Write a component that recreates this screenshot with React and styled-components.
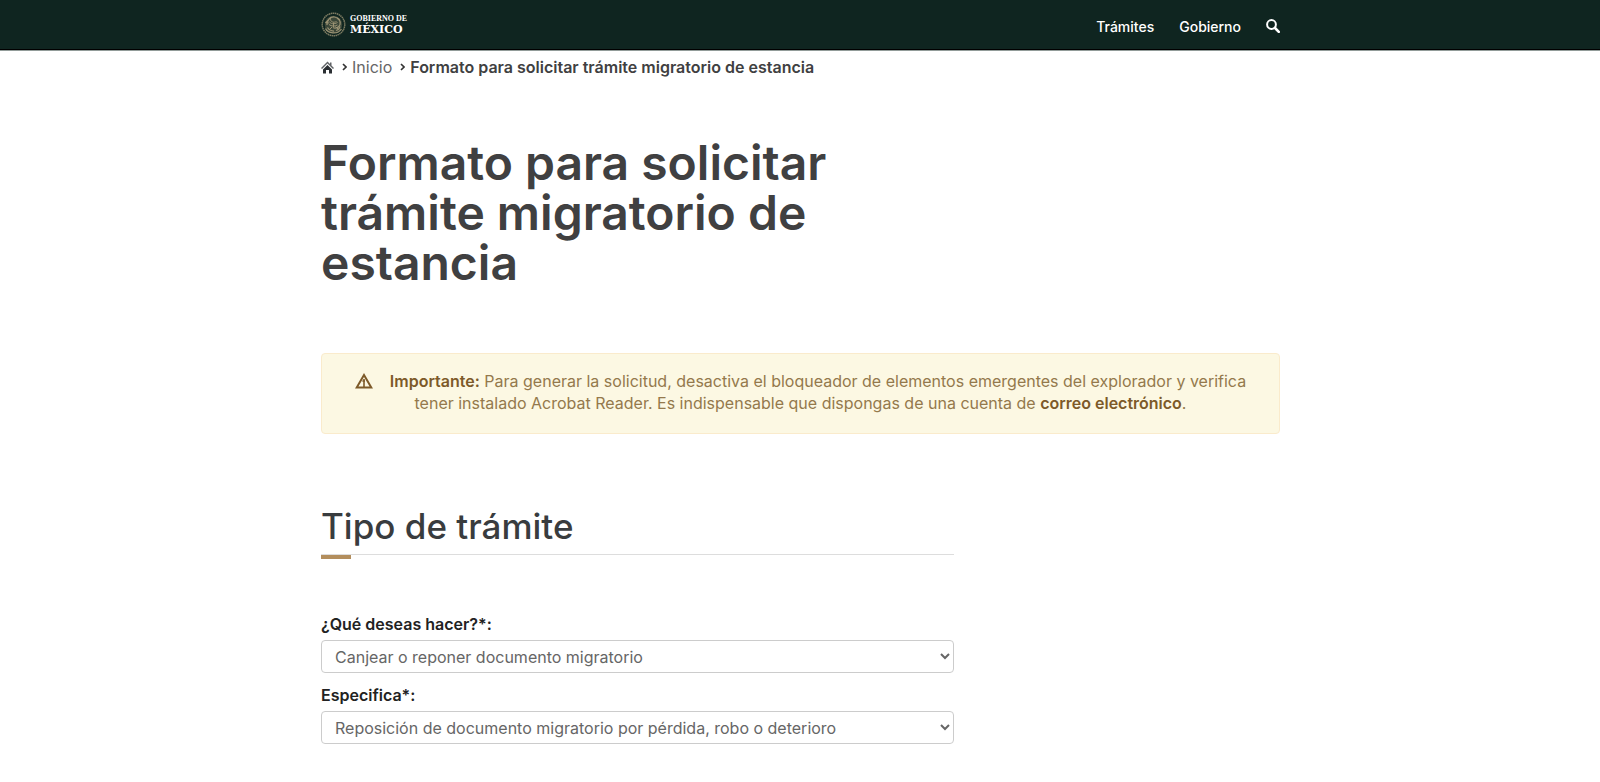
import React, { useState } from 'react'
import styled, { createGlobalStyle } from 'styled-components'

const GlobalStyle = createGlobalStyle`
*{
    box-sizing: border-box;
}
body{
    margin: 0;
    background: #fff;
    color: #404041;
    font-family: Inter, "Open Sans", sans-serif;
    font-size: 16px;
    line-height: 22px;
}
a{
    color: inherit;
    text-decoration: none;
}`

const Container = styled.div`
max-width: 988px;
margin: 0 auto;
padding: 0 14px 0 15px;
`
const Header = styled.header`
background: #0f2520;
border-bottom: 1px solid #000;
box-shadow: 0 1px 0 #929c99;
`
const Bar = styled(Container)`
display: flex;
align-items: center;
justify-content: space-between;
height: 49px;
`
const Logo = styled.a`
display: flex;
align-items: center;
gap: 4px;
color: #fff;
font-weight: 700;
`
const LogoText = styled.span`
display: flex;
flex-direction: column;
gap: 1px;
`
const LogoSmall = styled.span`
font-family: "Liberation Serif", serif;
font-size: 8px;
line-height: 8px;
`
const LogoLarge = styled.span`
font-family: "DejaVu Serif", serif;
font-size: 11px;
line-height: 11px;
`
const Nav = styled.nav`
display: flex;
align-items: center;
gap: 25px;
padding-top: 4px;
color: #fff;
font-size: 14px;
font-weight: 500;
`
const SearchButton = styled.button`
display: flex;
padding: 0 0 2px;
border: 0;
background: none;
color: #fff;
`
const Breadcrumb = styled.ol`
display: flex;
align-items: center;
flex-wrap: wrap;
margin: 0;
padding: 6px 0 0;
list-style: none;
`
const Crumb = styled.li`
display: flex;
align-items: center;
gap: 5px;
margin-right: 8px;
color: ${props => props.$active ? '#404041' : '#666'};
font-weight: ${props => props.$active ? 600 : 400};
`
const HomeLink = styled.a`
display: flex;
color: #2b2f33;
`
const Column = styled.div`
width: 66%;
min-width: 300px;
`
const Title = styled.h1`
margin: 60px 0 0;
color: #404041;
font-size: 48px;
font-weight: 600;
line-height: 50px;
`
const Alert = styled.div`
margin: 65px 0 0;
padding: 16px 30px 19px;
border: 1px solid #faebcc;
border-radius: 4px;
background: #fcf8e3;
color: #94794c;
text-align: center;
`
const AlertIcon = styled.span`
display: inline-flex;
margin-right: 17px;
vertical-align: -2px;
line-height: 16px;
`
const AlertText = styled.p`
margin: 0;
`
const Strong = styled.strong`
color: #7d5a29;
font-weight: 600;
`
const Subtitle = styled.h2`
margin: 72px 0 0;
padding-bottom: 8px;
border-bottom: 1px solid #ddd;
color: #393c3e;
font-size: 35px;
font-weight: 500;
line-height: 40px;
`
const Accent = styled.div`
width: 30px;
height: 4px;
background: #b38e5d;
`
const Form = styled.form`
display: flex;
flex-direction: column;
gap: 11px;
padding-top: 54px;
`
const Field = styled.div`
display: flex;
flex-direction: column;
gap: 5px;
`
const Label = styled.label`
color: #222;
font-weight: 600;
`
const Select = styled.select`
width: 100%;
height: 33px;
padding: 0 9px;
border: 1px solid #ccc;
border-radius: 4px;
background: #fff;
color: #666;
font-family: inherit;
font-size: 16px;
`

const Emblem = () => (
    <svg width="25" height="25" viewBox="0 0 50 50" fill="none" stroke="#9a9273" aria-hidden="true">
        <circle cx="25" cy="25" r="22.5" strokeWidth="3" strokeDasharray="3 1" opacity="0.8" />
        <circle cx="25" cy="25" r="17.5" fill="#8e8769" fillOpacity="0.35" stroke="none" />
        <path d="M9 33c4 10 24 13 32 1M13 31c3 5 8 7 13 7M38 29c-1 4-4 7-8 8" strokeWidth="2.5" />
        <path d="M12 26c-1-9 6-17 15-16 8 1 13 8 11 15-2 6-9 9-14 6" strokeWidth="2.5" />
        <path d="M18 14c2 6 7 8 13 5M16 19c4 5 10 6 17 2M16 25c5 4 11 4 17 1M22 30l-5 5M29 29l5 5M25 21v9" strokeWidth="2" />
        <path d="M15 16l-5 5 6 1M32 12l5 4M20 11l-3 3" strokeWidth="2.5" />
    </svg>
)

const HomeIcon = () => (
    <svg width="13" height="13" viewBox="0 0 26 26" fill="currentColor" aria-hidden="true">
        <path d="M13 1l5 5V3h3v6l5 5-2 2L13 5 2 16l-2-2z" opacity="0.75" />
        <path d="M4 17l9-9 9 9v8h-6v-7h-6v7H4z" />
    </svg>
)

const Chevron = () => (
    <svg width="5" height="8" viewBox="0 0 5 8" fill="none" stroke="#333" strokeWidth="1.6" aria-hidden="true">
        <path d="M1 1l3 3-3 3" />
    </svg>
)

const SearchIcon = () => (
    <svg width="14" height="14" viewBox="0 0 14 14" fill="none" stroke="currentColor" aria-hidden="true">
        <circle cx="5.5" cy="5.5" r="4.4" strokeWidth="2" />
        <path d="M9 9l3.8 3.8" strokeWidth="2.6" strokeLinecap="round" />
    </svg>
)

const WarningIcon = () => (
    <svg width="18" height="16" viewBox="0 0 18 16" fill="none" stroke="#7d5a29" aria-hidden="true">
        <path d="M9 2L16.3 14.5H1.7z" strokeWidth="2" />
        <path d="M9 6v8M7.4 8h2.6" strokeWidth="1.6" />
    </svg>
)

const SelectField = ({ id, label, options }) => {
    const [value, setValue] = useState(options[0])
    return (
        <Field>
            <Label htmlFor={id}>{label}</Label>
            <Select id={id} value={value} onChange={e => setValue(e.target.value)}>
                {options.map(option => <option key={option}>{option}</option>)}
            </Select>
        </Field>
    )
}

const App = () => (
    <>
        <GlobalStyle />
        <Header>
            <Bar>
                <Logo href="#">
                    <Emblem />
                    <LogoText>
                        <LogoSmall>GOBIERNO DE</LogoSmall>
                        <LogoLarge>MÉXICO</LogoLarge>
                    </LogoText>
                </Logo>
                <Nav>
                    <a href="#">Trámites</a>
                    <a href="#">Gobierno</a>
                    <SearchButton type="button" aria-label="Buscar"><SearchIcon /></SearchButton>
                </Nav>
            </Bar>
        </Header>
        <Container as="main">
            <Breadcrumb>
                <Crumb><HomeLink href="#" aria-label="Portada"><HomeIcon /></HomeLink></Crumb>
                <Crumb><Chevron /><a href="#">Inicio</a></Crumb>
                <Crumb $active><Chevron />Formato para solicitar trámite migratorio de estancia</Crumb>
            </Breadcrumb>
            <Column>
                <Title>Formato para solicitar trámite migratorio de estancia</Title>
            </Column>
            <Alert role="alert">
                <AlertText>
                    <AlertIcon><WarningIcon /></AlertIcon>
                    <Strong>Importante:</Strong> Para generar la solicitud, desactiva el bloqueador de elementos emergentes del explorador y verifica tener instalado Acrobat Reader. Es indispensable que dispongas de una cuenta de <Strong>correo electrónico</Strong>.
                </AlertText>
            </Alert>
            <Column>
                <Subtitle>Tipo de trámite</Subtitle>
                <Accent />
                <Form>
                    <SelectField
                        id="tramite"
                        label="¿Qué deseas hacer?*:"
                        options={['Canjear o reponer documento migratorio']}
                    />
                    <SelectField
                        id="especifica"
                        label="Especifica*:"
                        options={['Reposición de documento migratorio por pérdida, robo o deterioro']}
                    />
                </Form>
            </Column>
        </Container>
    </>
)

export default App
